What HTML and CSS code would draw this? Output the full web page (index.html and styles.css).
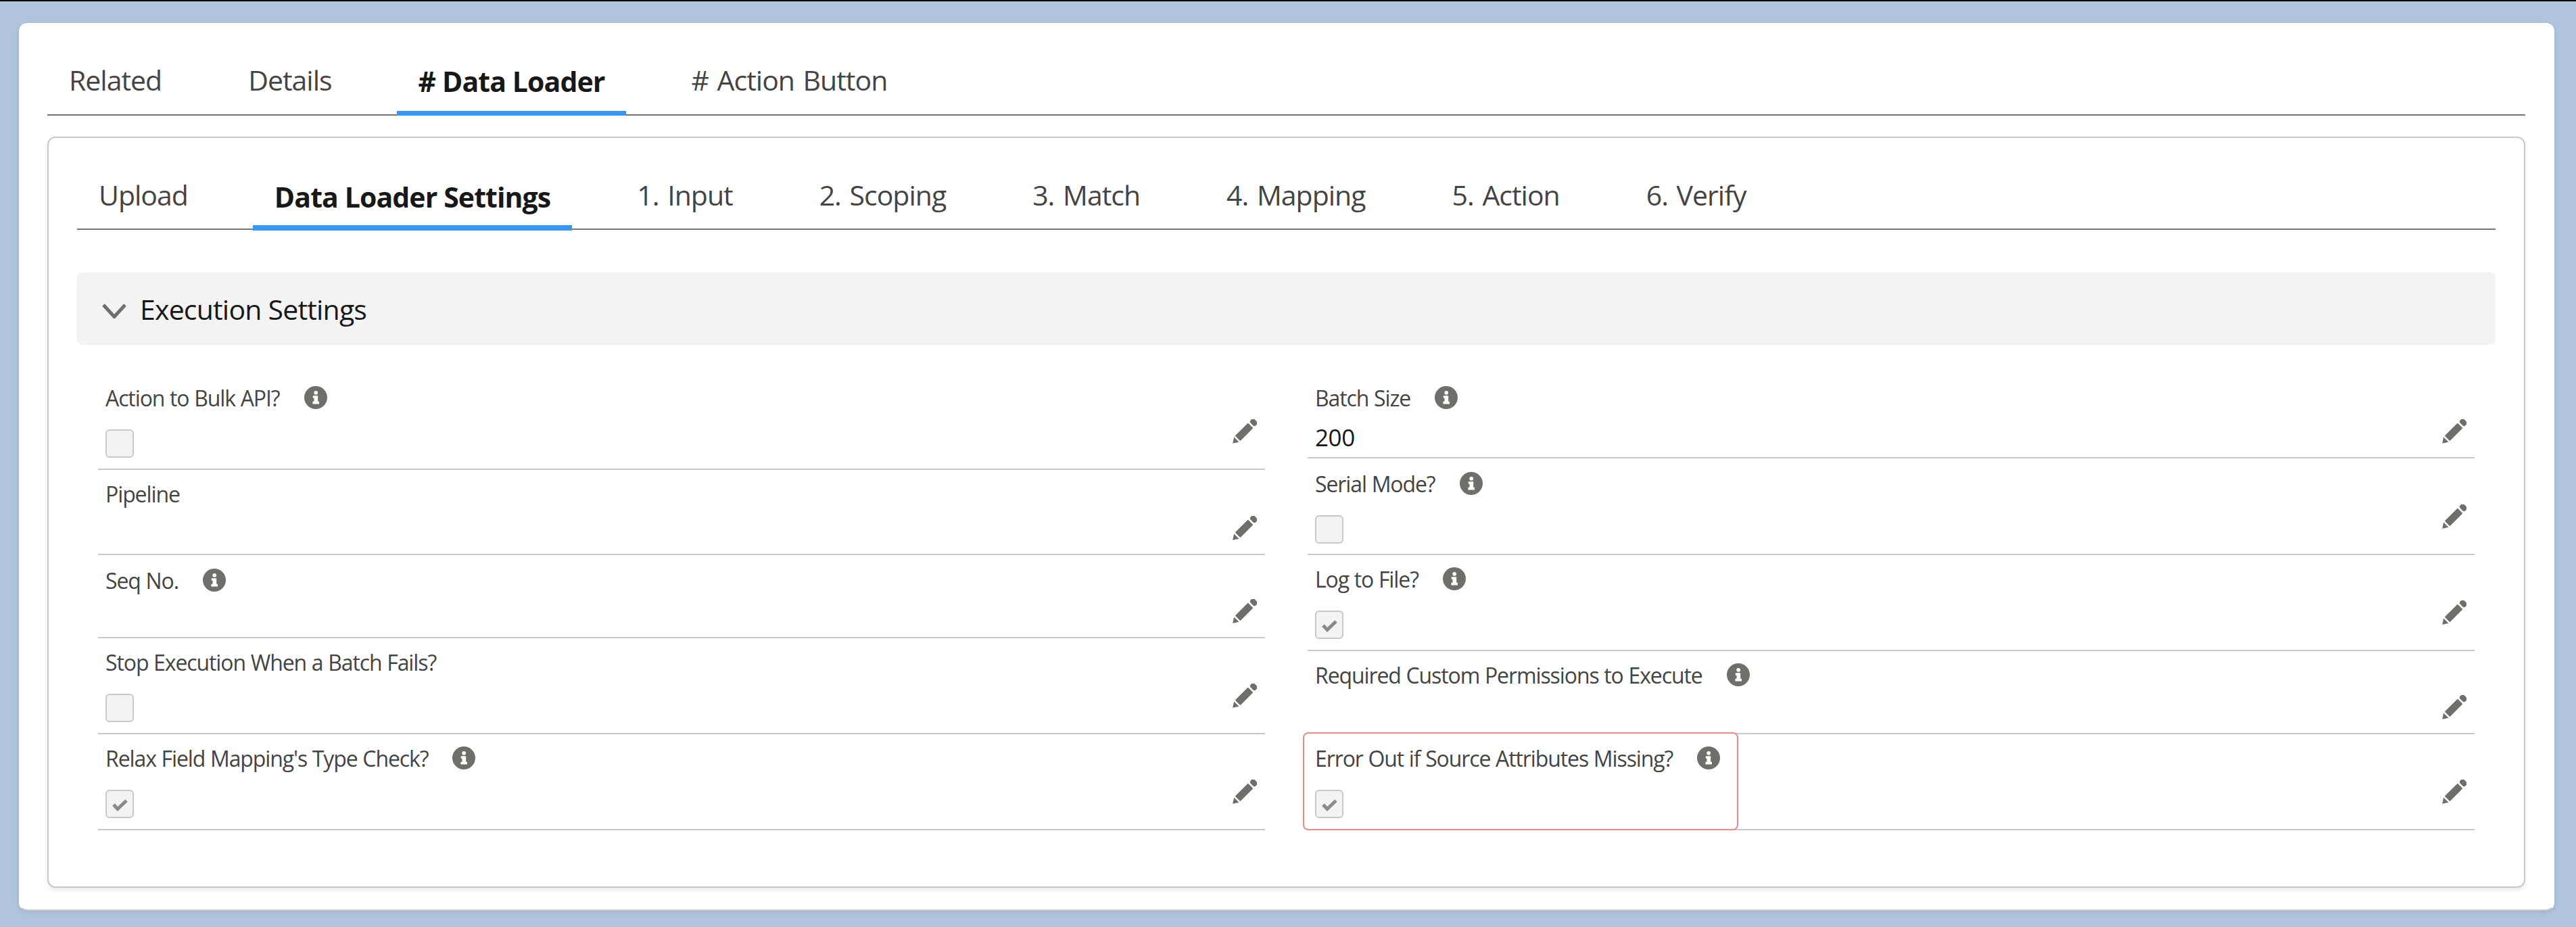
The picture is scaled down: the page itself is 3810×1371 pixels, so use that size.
FILE: index.html
```html
<!DOCTYPE html>
<html lang="en">
<head>
    <meta charset="UTF-8">
    <title>Data Loader Settings</title>
    <link rel="stylesheet" href="styles.css">
</head>
<body>
    <svg class="sprites" width="0" height="0">
        <symbol id="info" viewBox="0 0 34 34">
            <circle cx="17" cy="17" r="17" fill="#706e6b"/>
            <circle cx="17.2" cy="9.8" r="2.9" fill="#fff"/>
            <path d="M12.8 14.2h7.4v8.6h1.8v3.6h-9.6v-3.6h2.1v-5h-1.7z" fill="#fff"/>
        </symbol>
        <symbol id="pencil" viewBox="0 0 37 37">
            <g transform="translate(18.5 18.5) rotate(-45)" fill="#706e6b">
                <path d="M-24.5 0l8-5.2v10.4z"/>
                <rect x="-14" y="-5.4" width="27" height="10.8" rx="1"/>
                <rect x="15.6" y="-5.4" width="8" height="10.8" rx="3"/>
            </g>
        </symbol>
    </svg>

    <div class="card">
        <div class="tabs">
            <div class="tab">Related</div>
            <div class="tab">Details</div>
            <div class="tab active"># Data Loader</div>
            <div class="tab"># Action Button</div>
        </div>

        <div class="panel">
            <div class="tabs tabs-inner">
                <div class="tab">Upload</div>
                <div class="tab active">Data Loader Settings</div>
                <div class="tab">1. Input</div>
                <div class="tab">2. Scoping</div>
                <div class="tab">3. Match</div>
                <div class="tab">4. Mapping</div>
                <div class="tab">5. Action</div>
                <div class="tab">6. Verify</div>
            </div>

            <div class="section-head">
                <svg class="chevron" viewBox="0 0 36 22"><path d="M2 2l16 17.5L34 2"/></svg>
                <span>Execution Settings</span>
            </div>

            <div class="columns">
                <div class="column">
                    <div class="field field-check">
                        <div class="field-body">
                            <div class="label">Action to Bulk API?<svg class="info"><use href="#info"/></svg></div>
                            <div class="checkbox"></div>
                        </div>
                        <svg class="pencil"><use href="#pencil"/></svg>
                    </div>
                    <div class="field field-text">
                        <div class="field-body">
                            <div class="label">Pipeline</div>
                        </div>
                        <svg class="pencil"><use href="#pencil"/></svg>
                    </div>
                    <div class="field field-short">
                        <div class="field-body">
                            <div class="label low">Seq No.<svg class="info"><use href="#info"/></svg></div>
                        </div>
                        <svg class="pencil"><use href="#pencil"/></svg>
                    </div>
                    <div class="field field-check">
                        <div class="field-body">
                            <div class="label">Stop Execution When a Batch Fails?</div>
                            <div class="checkbox"></div>
                        </div>
                        <svg class="pencil"><use href="#pencil"/></svg>
                    </div>
                    <div class="field field-check">
                        <div class="field-body">
                            <div class="label">Relax Field Mapping's Type Check?<svg class="info"><use href="#info"/></svg></div>
                            <div class="checkbox checked"><svg viewBox="0 0 38 38"><path d="M10 20l6 6.5L29 14"/></svg></div>
                        </div>
                        <svg class="pencil"><use href="#pencil"/></svg>
                    </div>
                </div>

                <div class="column">
                    <div class="field field-value">
                        <div class="field-body">
                            <div class="label">Batch Size<svg class="info"><use href="#info"/></svg></div>
                            <div class="value">200</div>
                        </div>
                        <svg class="pencil"><use href="#pencil"/></svg>
                    </div>
                    <div class="field field-serial">
                        <div class="field-body">
                            <div class="label low">Serial Mode?<svg class="info"><use href="#info"/></svg></div>
                            <div class="checkbox"></div>
                        </div>
                        <svg class="pencil"><use href="#pencil"/></svg>
                    </div>
                    <div class="field field-check">
                        <div class="field-body">
                            <div class="label">Log to File?<svg class="info"><use href="#info"/></svg></div>
                            <div class="checkbox checked"><svg viewBox="0 0 38 38"><path d="M10 20l6 6.5L29 14"/></svg></div>
                        </div>
                        <svg class="pencil"><use href="#pencil"/></svg>
                    </div>
                    <div class="field field-short">
                        <div class="field-body">
                            <div class="label">Required Custom Permissions to Execute<svg class="info"><use href="#info"/></svg></div>
                        </div>
                        <svg class="pencil"><use href="#pencil"/></svg>
                    </div>
                    <div class="field field-check">
                        <div class="field-body has-error">
                            <div class="label">Error Out if Source Attributes Missing?<svg class="info"><use href="#info"/></svg></div>
                            <div class="checkbox checked"><svg viewBox="0 0 38 38"><path d="M10 20l6 6.5L29 14"/></svg></div>
                        </div>
                        <svg class="pencil"><use href="#pencil"/></svg>
                    </div>
                </div>
            </div>
        </div>
    </div>
</body>
</html>
```

FILE: styles.css
```css
* {
    box-sizing: border-box;
}
html, body {
    height: 100%;
}
body {
    margin: 0;
    padding: 34px 32px 24px 28px;
    border-top: 2px solid #000;
    background: #b0c4de;
    font-family: "Open Sans", "Noto Sans", sans-serif;
    color: #444;
    overflow: hidden;
}
.sprites {
    position: absolute;
}

.card {
    height: 1313px;
    margin-top: -2px;
    padding: 0 41px 32px 40px;
    background: #fff;
    border: 2px solid #fff;
    border-bottom-color: #c9c9c9;
    border-radius: 12px;
    box-shadow: 0 2px 6px rgba(0, 0, 0, 0.1);
}
.panel {
    height: 1111px;
    margin-top: 31px;
    padding: 0 42px;
    border: 2px solid #c9c9c9;
    border-radius: 12px;
    box-shadow: 0 4px 6px rgba(0, 0, 0, 0.08);
}

.tabs {
    display: flex;
    align-items: flex-end;
    gap: 64px;
    height: 135px;
    border-bottom: 2px solid #747474;
    font-size: 41px;
    letter-spacing: -1px;
    word-spacing: 3px;
}
.tabs-inner {
    height: 136px;
}
.tab {
    height: 100px;
    padding: 0 32px;
    line-height: 98px;
    white-space: nowrap;
}
.tabs-inner .tab {
    line-height: 100px;
}
.tab.active {
    margin-bottom: -2px;
    border-bottom: 7px solid #3c96f0;
    color: #181818;
    font-weight: 700;
    letter-spacing: -0.9px;
    word-spacing: 0;
}
.tabs-inner .tab.active {
    margin-bottom: -3px;
    border-bottom-width: 8px;
}

.section-head {
    display: flex;
    align-items: center;
    gap: 20px;
    height: 107px;
    margin-top: 63px;
    padding-left: 37px;
    background: #f3f3f3;
    border-radius: 8px;
    font-size: 41px;
    letter-spacing: -0.8px;
    color: #181818;
}
.chevron {
    width: 36px;
    height: 22px;
    margin-top: 6px;
}
.chevron path {
    fill: none;
    stroke: #706e6b;
    stroke-width: 5;
}

.columns {
    display: flex;
    gap: 63px;
    margin-top: 43px;
    padding: 0 31px;
}
.column {
    flex: 1;
}

.field {
    display: flex;
    justify-content: space-between;
    align-items: flex-end;
    padding: 0 12px 0 11px;
    border-bottom: 2px solid #c9c9c9;
}
.field-check { height: 142px; }
.field-serial { height: 143px; }
.field-text { height: 126px; }
.field-value { height: 125px; }
.field-short { height: 123px; }

.field-body {
    align-self: flex-start;
    padding-top: 11px;
}
.field-body.has-error {
    align-self: stretch;
    margin: -3px 0 -2px -18px;
    padding: 12px 25px 0 16px;
    background: #fff;
    border: 2px solid #e28c8c;
    border-radius: 8px;
}

.label {
    display: flex;
    align-items: center;
    gap: 36px;
    height: 48px;
    font-size: 32px;
    letter-spacing: -1.1px;
    word-spacing: 0.5px;
    white-space: nowrap;
}
.label.low {
    margin-top: 2px;
}
.info {
    width: 34px;
    height: 34px;
}
.value {
    margin-top: 11px;
    font-size: 35px;
    letter-spacing: -0.4px;
    line-height: 48px;
    color: #181818;
}
.checkbox {
    width: 42px;
    height: 42px;
    margin-top: 23px;
    background: #f3f3f3;
    border: 2px solid #c9c9c9;
    border-radius: 6px;
}
.checkbox svg {
    display: block;
    width: 38px;
    height: 38px;
}
.checkbox path {
    fill: none;
    stroke: #8a8a8a;
    stroke-width: 5;
}

.pencil {
    flex: none;
    width: 37px;
    height: 37px;
    margin-bottom: 19px;
}
.field-check .pencil,
.field-serial .pencil {
    margin-bottom: 36px;
}
```
